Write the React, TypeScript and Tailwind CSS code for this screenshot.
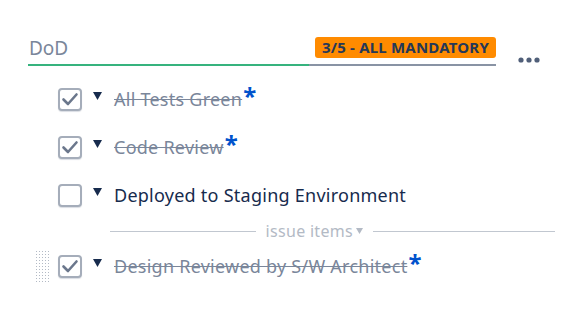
const items = [
  { label: "All Tests Green", done: true, mandatory: true },
  { label: "Code Review", done: true, mandatory: true },
  { label: "Deployed to Staging Environment", done: false, mandatory: false },
];

const CheckBox = ({ checked }: { checked: boolean }) => (
  <div className="w-[24px] h-[23px] rounded-[4px] border-2 border-[#a5adba] bg-white flex items-center justify-center shadow-[0_1px_1px_rgba(9,30,66,0.15)]">
    {checked && (
      <svg width="18" height="18" viewBox="0 0 18 18">
        <path d="M2.5 9.5 L7 14 L15.5 4.5" fill="none" stroke="#6b778c" strokeWidth="2.6" strokeLinecap="round" strokeLinejoin="round" />
      </svg>
    )}
  </div>
);

const Caret = () => (
  <svg width="9" height="8" viewBox="0 0 9 8" className="mb-[6px]">
    <path d="M0 0 H9 L4.5 8 Z" fill="#172b4d" />
  </svg>
);

const Row = ({ label, done, mandatory }: { label: string; done: boolean; mandatory: boolean }) => (
  <div className="flex items-center h-[24px]">
    <CheckBox checked={done} />
    <div className="ml-[11px] mr-[12px] flex items-center"><Caret /></div>
    <span
      className={
        done
          ? "text-[18px] tracking-[0.25px] text-[#7a869a] line-through decoration-[#7a869a]"
          : "text-[18px] tracking-[0.25px] text-[#172b4d]"
      }
    >
      {label}
    </span>
    {mandatory && <span className="text-[#0052cc] text-[24px] font-bold leading-none mt-[-6px] ml-[1px]">*</span>}
  </div>
);

export default function App() {
  return (
    <div className="w-[580px] h-[329px] bg-white font-['Noto_Sans',sans-serif] relative">
      <div className="flex items-end pl-[28px] pt-[36px]">
        <div className="w-[468px] flex items-end border-b-2 border-[#8993a4] relative h-[30px]">
          <span className="text-[19px] text-[#7a869a] pl-[1px] pb-[6px] flex-1 leading-none">DoD</span>
          <span className="mb-[6px] bg-[#ff8b00] text-[#253858] font-bold text-[15px] leading-[21px] px-[7px] rounded-[3px] tracking-[0.2px]">
            3/5 - ALL MANDATORY
          </span>
          <div className="absolute left-0 bottom-[-2px] h-[2px] w-[281px] bg-[#36b37e]" />
        </div>
        <svg width="22" height="6" viewBox="0 0 22 6" className="ml-[22px] mb-[3px]">
          <circle cx="3" cy="3" r="2.6" fill="#505f79" />
          <circle cx="11" cy="3" r="2.6" fill="#505f79" />
          <circle cx="19" cy="3" r="2.6" fill="#505f79" />
        </svg>
      </div>

      <div className="pl-[58px] pt-[21px] flex flex-col gap-[24px]">
        {items.map((it) => (
          <Row key={it.label} {...it} />
        ))}
      </div>

      <div className="flex items-center ml-[110px] mr-[25px] mt-[16px] gap-[10px]">
        <div className="flex-1 h-px bg-[#c1c7d0]" />
        <span className="text-[16px] tracking-[0.3px] text-[#b3bac5] leading-none flex items-center gap-[3px]">
          issue items
          <svg width="7" height="6" viewBox="0 0 7 6"><path d="M0 0 H7 L3.5 6 Z" fill="#b3bac5" /></svg>
        </span>
        <div className="w-[182px] h-px bg-[#c1c7d0]" />
      </div>

      <div className="flex items-center pl-[35px] mt-[11px]">
        <div className="w-[16px] h-[32px] mr-[7px] bg-[radial-gradient(#b3bac5_1px,transparent_1px)] bg-[length:3px_3px]" />
        <Row label="Design Reviewed by S/W Architect" done mandatory />
      </div>
    </div>
  );
}
